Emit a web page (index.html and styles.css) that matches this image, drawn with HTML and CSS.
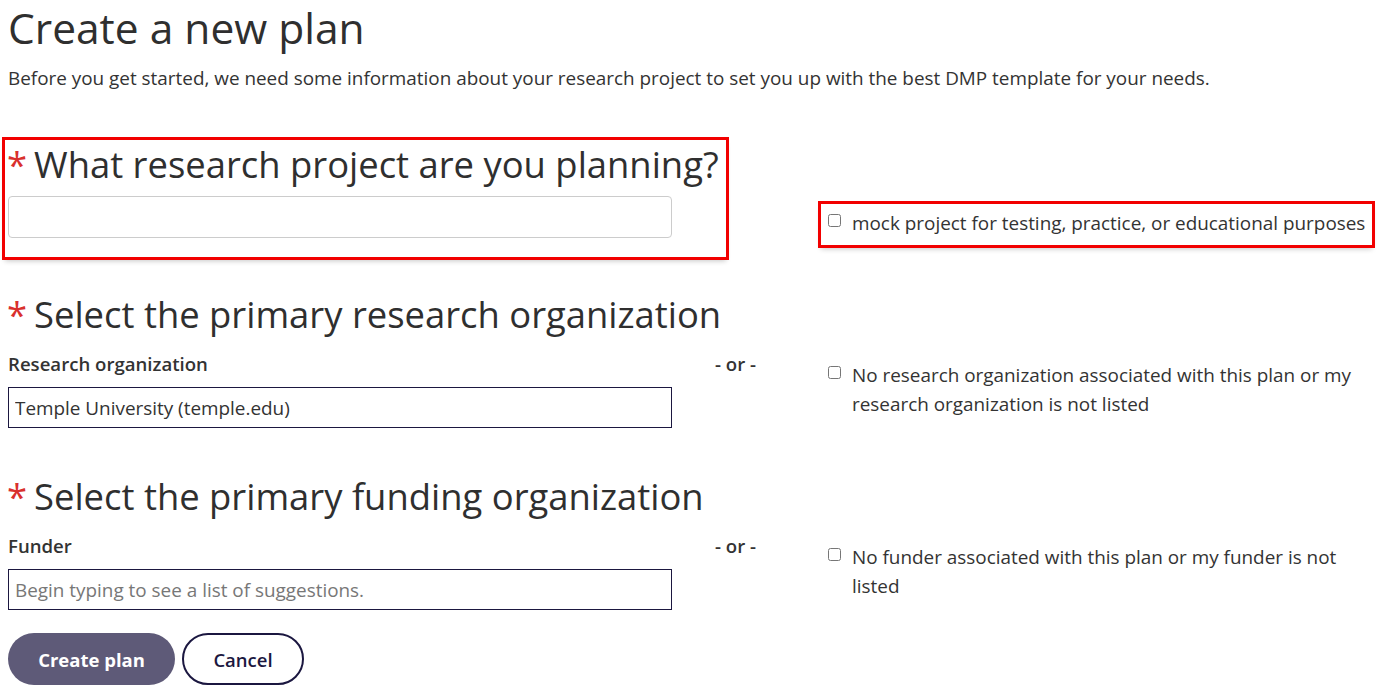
FILE: index.html
```html
<!DOCTYPE html>
<html lang="en">
<head>
<meta charset="utf-8">
<title>Create a new plan</title>
<link rel="stylesheet" href="styles.css">
</head>
<body>
<main class="page">
  <h1 class="title">Create a new plan</h1>
  <p class="intro">Before you get started, we need some information about your research project to set you up with the best DMP template for your needs.</p>

  <section class="row row-project">
    <div class="col-left">
      <div class="highlight highlight-left">
        <h2 class="question"><span class="req">*</span>What research project are you planning?</h2>
        <input class="field field-soft" type="text">
      </div>
    </div>
    <div class="col-right">
      <label class="check highlight highlight-right">
        <input type="checkbox" class="box">
        <span class="nowrap">mock project for testing, practice, or educational purposes</span>
      </label>
    </div>
  </section>

  <section class="row row-org">
    <div class="col-left">
      <h2 class="question"><span class="req">*</span>Select the primary research organization</h2>
      <div class="label-line">
        <span class="label">Research organization</span>
        <span class="or">- or -</span>
      </div>
      <input class="field field-dark" type="text" value="Temple University (temple.edu)">
    </div>
    <div class="col-right col-right-low">
      <label class="check">
        <input type="checkbox" class="box">
        <span>No research organization associated with this plan or my research organization is not listed</span>
      </label>
    </div>
  </section>

  <section class="row row-funder">
    <div class="col-left">
      <h2 class="question"><span class="req">*</span>Select the primary funding organization</h2>
      <div class="label-line">
        <span class="label">Funder</span>
        <span class="or">- or -</span>
      </div>
      <input class="field field-dark" type="text" placeholder="Begin typing to see a list of suggestions.">
    </div>
    <div class="col-right col-right-low">
      <label class="check">
        <input type="checkbox" class="box">
        <span>No funder associated with this plan or my funder is not listed</span>
      </label>
    </div>
  </section>

  <div class="actions">
    <button class="btn btn-primary" type="button">Create plan</button>
    <button class="btn btn-outline" type="button">Cancel</button>
  </div>
</main>
</body>
</html>
```

FILE: styles.css
```css
* { box-sizing: border-box; }

html, body {
  margin: 0;
  padding: 0;
  background: #fff;
}

body {
  font-family: "Open Sans", "Noto Sans", sans-serif;
  color: #333;
  font-size: 18.9px;
  overflow: hidden;
}

.page {
  padding: 0 8px;
}

.title {
  font-size: 42.5px;
  font-weight: 500;
  line-height: 56px;
  margin: 0;
  color: #2f2f2f;
}

.intro {
  font-size: 18.9px;
  line-height: 27px;
  margin: 9px 0 0;
}

.row {
  display: flex;
  align-items: flex-start;
}

.col-left {
  width: 760px;
  flex: none;
}

.col-right {
  flex: 1;
  min-width: 0;
  padding-left: 60px;
}

.row-project {
  margin-top: 48px;
}

.highlight {
  outline: 3px solid #f20000;
  box-shadow: 0 4px 5px rgba(0, 0, 0, 0.22);
}

.highlight-left {
  width: 721px;
  margin-left: -3px;
  padding: 2px 0 19px 3px;
}

.question {
  font-size: 36.4px;
  font-weight: 500;
  line-height: 44px;
  margin: 0;
  white-space: nowrap;
  color: #2f2f2f;
}

.req {
  color: #d9302c;
  margin-left: -1px;
  margin-right: 7px;
}

.field {
  display: block;
  width: 664px;
  font-family: inherit;
  font-size: 18.9px;
  color: #333;
  padding: 0 6px;
  background: #fff;
}

.field-soft {
  height: 42px;
  border: 1px solid #ccc;
  border-radius: 4px;
  margin-top: 10px;
}

.field-dark {
  height: 41px;
  border: 1px solid #1b1740;
  border-radius: 0;
}

.field::placeholder {
  color: #777;
}

.check {
  display: flex;
  align-items: flex-start;
  gap: 11px;
  font-size: 18.9px;
  line-height: 29px;
}

.nowrap {
  white-space: nowrap;
}

.box {
  width: 13px;
  height: 13px;
  margin: 5px 0 0;
  flex: none;
}

.highlight-right {
  margin: 64px -3px 0 -7px;
  padding: 5px 7px 7px 7px;
}

.row-org {
  margin-top: 35px;
}

.label-line {
  display: flex;
  justify-content: space-between;
  width: 748px;
  margin: 14px 0 10px;
  font-size: 18.6px;
  font-weight: 600;
  line-height: 27px;
}

.col-right-low {
  padding-top: 69px;
}

.row-funder {
  margin-top: 46px;
}

.actions {
  display: flex;
  gap: 7px;
  margin-top: 23px;
}

.btn {
  font-family: inherit;
  font-size: 18.5px;
  font-weight: 700;
  height: 52px;
  border-radius: 26px;
  cursor: pointer;
}

.btn-primary {
  background: #5e5a78;
  color: #fff;
  border: none;
  width: 167px;
}

.btn-outline {
  background: #fff;
  color: #1b1740;
  border: 2px solid #1b1740;
  width: 122px;
  font-weight: 600;
}
```
